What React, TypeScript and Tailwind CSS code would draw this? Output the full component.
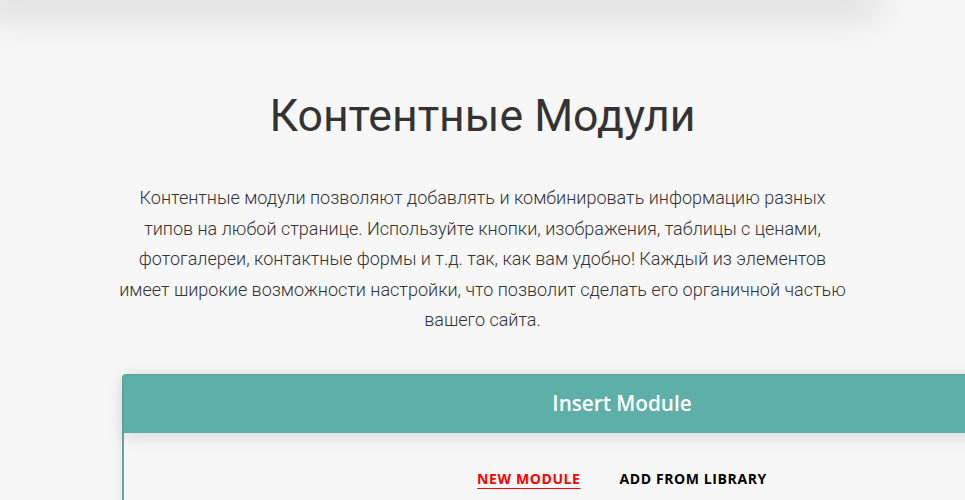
import React, { useState } from "react";

export default function App() {
  const [tab, setTab] = useState<"new" | "library">("new");

  return (
    <div className="relative h-[500px] w-full overflow-hidden bg-[#f7f7f7] font-['Roboto',sans-serif]">
      {/* shadow of the top bar that sits just above the viewport */}
      <div className="-mt-[24px] ml-[-20px] h-[24px] w-[900px] shadow-[0_12px_40px_rgba(0,0,0,0.16)]" />

      <div className="flex flex-col items-center">
        <h1 className="mt-[86px] text-[44.6px] font-normal leading-[60px] text-[#333333]">
          Контентные Модули
        </h1>
        <p className="mt-[37px] w-[780px] text-center text-[18px] font-light leading-[30.5px] text-[#333333]">
          Контентные модули позволяют добавлять и комбинировать информацию разных
          <br />
          типов на любой странице. Используйте кнопки, изображения, таблицы с ценами,
          <br />
          фотогалереи, контактные формы и т.д. так, как вам удобно! Каждый из элементов
          <br />
          имеет широкие возможности настройки, что позволит сделать его органичной частью
          <br />
          вашего сайта.
        </p>
      </div>

      {/* Insert Module dialog */}
      <div className="ml-[122px] mt-[38px] w-[1000px] rounded-t-[4px] border-x-2 border-t border-[#5aaba3] bg-[#f7f7f7] shadow-[0_0_14px_rgba(0,0,0,0.08)] font-['Open_Sans',sans-serif]">
        <div className="relative z-10 flex h-[58px] items-center justify-center bg-[#5eafa7] shadow-[0_6px_16px_rgba(0,0,0,0.1)]">
          <span className="text-[20.7px] font-semibold text-white">Insert Module</span>
        </div>
        <div className="flex justify-center gap-[39px] pt-[35px] pb-[40px]">
          <button
            onClick={() => setTab("new")}
            className={`cursor-pointer text-[14px] font-bold tracking-[0.6px] ${
              tab === "new" ? "text-[#ff0000] underline underline-offset-[4px]" : "text-black"
            }`}
          >
            NEW MODULE
          </button>
          <button
            onClick={() => setTab("library")}
            className={`cursor-pointer text-[14px] font-bold tracking-[0.6px] ${
              tab === "library" ? "text-[#ff0000] underline underline-offset-[4px]" : "text-black"
            }`}
          >
            ADD FROM LIBRARY
          </button>
        </div>
      </div>
    </div>
  );
}
